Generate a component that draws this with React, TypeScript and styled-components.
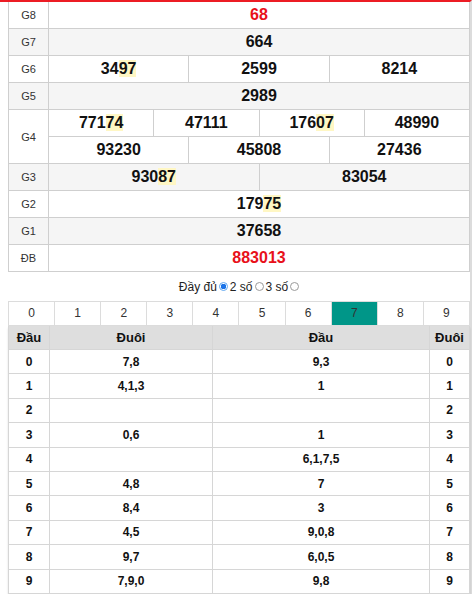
import React from "react";
import styled, { createGlobalStyle } from "styled-components";

const Global = createGlobalStyle`
  html, body { margin: 0; padding: 0; background: #fff; }
  body { font-family: "Liberation Sans", Arial, sans-serif; color: #222; }
  * { box-sizing: border-box; }
`;

const Page = styled.div`
  width: 472px;
  border-top: 2px solid #ec1c24;
  border-right: 2px solid #dcdcdc;
  padding-left: 8px;
`;

const Board = styled.div`
  width: 462px;
  border-left: 1px solid #cfcfcf;
  border-right: 1px solid #cfcfcf;
`;

const Row = styled.div<{ $alt?: boolean }>`
  display: flex;
  border-bottom: 1px solid #cfcfcf;
  background: ${(p) => (p.$alt ? "#f5f5f5" : "#fff")};
`;

const Label = styled.div`
  width: 40px;
  flex: none;
  border-right: 1px solid #cfcfcf;
  display: flex;
  align-items: center;
  justify-content: center;
  font-size: 11px;
  color: #333;
`;

const Values = styled.div`
  flex: 1;
  display: flex;
  flex-direction: column;
`;

const SubRow = styled.div`
  display: flex;
  & + & { border-top: 1px solid #cfcfcf; }
`;

const Cell = styled.div<{ $red?: boolean }>`
  flex: 1;
  height: 26px;
  line-height: 26px;
  text-align: center;
  font-size: 16px;
  font-weight: bold;
  color: ${(p) => (p.$red ? "#e8101a" : "#111")};
  & + & { border-left: 1px solid #cfcfcf; }
`;

const Mark = styled.span`
  background: #fff7c4;
`;

const RadioBar = styled.div`
  height: 29px;
  display: flex;
  align-items: center;
  justify-content: center;
  font-size: 12px;
  color: #222;
  gap: 2px;
`;

const Option = styled.span`
  display: inline-flex;
  align-items: center;
  gap: 2px;
`;

const Radio = styled.span<{ $on?: boolean }>`
  width: 9px;
  height: 9px;
  border-radius: 50%;
  display: inline-block;
  border: 1px solid ${(p) => (p.$on ? "#5ea6f0" : "#9a9a9a")};
  background: ${(p) => (p.$on ? "radial-gradient(circle, #1a73e8 0 2.6px, #fff 3px)" : "#fff")};
`;

const Tabs = styled.div`
  width: 462px;
  display: grid;
  grid-template-columns: repeat(10, 1fr);
  border: 1px solid #dcdcdc;
  border-right: none;
`;

const Tab = styled.div<{ $active?: boolean }>`
  height: 23px;
  line-height: 23px;
  text-align: center;
  font-size: 12px;
  color: #333;
  border-right: 1px solid #dcdcdc;
  background: ${(p) => (p.$active ? "#009688" : "#fff")};
`;

const Loto = styled.div`
  width: 462px;
  border-left: 1px solid #d6d6d6;
  border-right: 1px solid #d6d6d6;
  box-shadow: 0 2px 2px rgba(0, 0, 0, 0.12);
`;

const LotoRow = styled.div<{ $head?: boolean }>`
  display: grid;
  grid-template-columns: 40px 163px 1fr 40px;
  border-bottom: 1px solid #d6d6d6;
  background: ${(p) => (p.$head ? "#dedede" : "#fff")};
  height: ${(p) => (p.$head ? "24px" : "24.4px")};
`;

const LotoCell = styled.div<{ $head?: boolean }>`
  display: flex;
  align-items: center;
  justify-content: center;
  font-size: ${(p) => (p.$head ? "13px" : "12px")};
  font-weight: bold;
  color: #111;
  & + & { border-left: 1px solid #d6d6d6; }
`;

function Num({ v, mark, red }: { v: string; mark?: boolean; red?: boolean }) {
  return (
    <Cell $red={red}>
      {mark ? (
        <>
          {v.slice(0, -2)}
          <Mark>{v.slice(-2)}</Mark>
        </>
      ) : (
        v
      )}
    </Cell>
  );
}

const dau = ["7,8", "4,1,3", "", "0,6", "", "4,8", "8,4", "4,5", "9,7", "7,9,0"];
const duoi = ["9,3", "1", "", "1", "6,1,7,5", "7", "3", "9,0,8", "6,0,5", "9,8"];

export default function App() {
  return (
    <Page>
      <Global />
      <Board>
        <Row>
          <Label>G8</Label>
          <Values><SubRow><Num v="68" red /></SubRow></Values>
        </Row>
        <Row $alt>
          <Label>G7</Label>
          <Values><SubRow><Num v="664" /></SubRow></Values>
        </Row>
        <Row>
          <Label>G6</Label>
          <Values>
            <SubRow>
              <Num v="3497" mark />
              <Num v="2599" />
              <Num v="8214" />
            </SubRow>
          </Values>
        </Row>
        <Row $alt>
          <Label>G5</Label>
          <Values><SubRow><Num v="2989" /></SubRow></Values>
        </Row>
        <Row>
          <Label>G4</Label>
          <Values>
            <SubRow>
              <Num v="77174" mark />
              <Num v="47111" />
              <Num v="17607" mark />
              <Num v="48990" />
            </SubRow>
            <SubRow>
              <Num v="93230" />
              <Num v="45808" />
              <Num v="27436" />
            </SubRow>
          </Values>
        </Row>
        <Row $alt>
          <Label>G3</Label>
          <Values>
            <SubRow>
              <Num v="93087" mark />
              <Num v="83054" />
            </SubRow>
          </Values>
        </Row>
        <Row>
          <Label>G2</Label>
          <Values><SubRow><Num v="17975" mark /></SubRow></Values>
        </Row>
        <Row $alt>
          <Label>G1</Label>
          <Values><SubRow><Num v="37658" /></SubRow></Values>
        </Row>
        <Row>
          <Label>ĐB</Label>
          <Values><SubRow><Num v="883013" red /></SubRow></Values>
        </Row>
      </Board>
      <RadioBar>
        <Option>Đầy đủ <Radio $on /></Option>
        <Option>2 số <Radio /></Option>
        <Option>3 số <Radio /></Option>
      </RadioBar>
      <Tabs>
        {Array.from({ length: 10 }, (_, i) => (
          <Tab key={i} $active={i === 7}>{i}</Tab>
        ))}
      </Tabs>
      <Loto>
        <LotoRow $head>
          <LotoCell $head>Đầu</LotoCell>
          <LotoCell $head>Đuôi</LotoCell>
          <LotoCell $head>Đầu</LotoCell>
          <LotoCell $head>Đuôi</LotoCell>
        </LotoRow>
        {dau.map((d, i) => (
          <LotoRow key={i}>
            <LotoCell>{i}</LotoCell>
            <LotoCell>{d}</LotoCell>
            <LotoCell>{duoi[i]}</LotoCell>
            <LotoCell>{i}</LotoCell>
          </LotoRow>
        ))}
      </Loto>
    </Page>
  );
}
